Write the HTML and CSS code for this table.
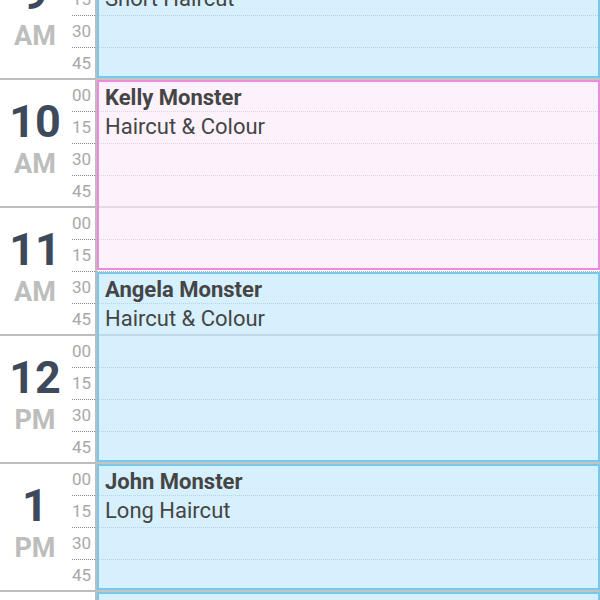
FILE: index.html
```html
<!DOCTYPE html>
<html>
<head>
<meta charset="utf-8">
<link rel="stylesheet" href="styles.css">
</head>
<body>
<div class="calendar">
  <div class="gutter">
    <div class="hour">
      <div class="hour-label"><div class="num">9</div><div class="ampm">AM</div></div>
      <div class="mins"><div class="min">00</div><div class="min">15</div><div class="min">30</div><div class="min">45</div></div>
    </div>
    <div class="hour">
      <div class="hour-label"><div class="num">10</div><div class="ampm">AM</div></div>
      <div class="mins"><div class="min">00</div><div class="min">15</div><div class="min">30</div><div class="min">45</div></div>
    </div>
    <div class="hour">
      <div class="hour-label"><div class="num">11</div><div class="ampm">AM</div></div>
      <div class="mins"><div class="min">00</div><div class="min">15</div><div class="min">30</div><div class="min">45</div></div>
    </div>
    <div class="hour">
      <div class="hour-label"><div class="num">12</div><div class="ampm">PM</div></div>
      <div class="mins"><div class="min">00</div><div class="min">15</div><div class="min">30</div><div class="min">45</div></div>
    </div>
    <div class="hour">
      <div class="hour-label"><div class="num">1</div><div class="ampm">PM</div></div>
      <div class="mins"><div class="min">00</div><div class="min">15</div><div class="min">30</div><div class="min">45</div></div>
    </div>
    <div class="hour">
      <div class="hour-label"><div class="num">2</div><div class="ampm">PM</div></div>
      <div class="mins"><div class="min">00</div><div class="min">15</div><div class="min">30</div><div class="min">45</div></div>
    </div>
  </div>
  <div class="day">
    <div class="dhour"><div class="dslot"></div><div class="dslot"></div><div class="dslot"></div><div class="dslot"></div></div>
    <div class="dhour"><div class="dslot"></div><div class="dslot"></div><div class="dslot"></div><div class="dslot"></div></div>
    <div class="dhour"><div class="dslot"></div><div class="dslot"></div><div class="dslot"></div><div class="dslot"></div></div>
    <div class="dhour"><div class="dslot"></div><div class="dslot"></div><div class="dslot"></div><div class="dslot"></div></div>
    <div class="dhour"><div class="dslot"></div><div class="dslot"></div><div class="dslot"></div><div class="dslot"></div></div>
    <div class="dhour"><div class="dslot"></div><div class="dslot"></div><div class="dslot"></div><div class="dslot"></div></div>

    <div class="appt blue" style="top:0px;height:126px">
      <div class="name">Anna Monster</div>
      <div class="service">Short Haircut</div>
    </div>
    <div class="appt pink" style="top:128px;height:190px">
      <div class="name">Kelly Monster</div>
      <div class="service">Haircut &amp; Colour</div>
    </div>
    <div class="appt blue" style="top:320px;height:190px">
      <div class="name">Angela Monster</div>
      <div class="service">Haircut &amp; Colour</div>
    </div>
    <div class="appt blue" style="top:512px;height:126px">
      <div class="name">John Monster</div>
      <div class="service">Long Haircut</div>
    </div>
    <div class="appt blue" style="top:640px;height:126px">
      <div class="name">Mary Monster</div>
      <div class="service">Blow Dry</div>
    </div>
  </div>
</div>
</body>
</html>
```

FILE: styles.css
```css
html, body {
  margin: 0;
  padding: 0;
  background: #ffffff;
  overflow: hidden;
  height: 600px;
}

body {
  font-family: Roboto, "Liberation Sans", sans-serif;
}

.calendar {
  display: flex;
  margin-top: -48px;
}

.gutter {
  width: 95px;
  flex: none;
  border-right: 2px solid #bdbdbd;
}

.hour {
  height: 128px;
  box-sizing: border-box;
  border-bottom: 2px solid #bdbdbd;
  display: flex;
}

.hour-label {
  width: 70px;
  flex: none;
  text-align: center;
  padding-top: 20px;
  box-sizing: border-box;
}

.num {
  font-size: 45px;
  line-height: 44px;
  font-weight: 700;
  color: #3d4a5b;
}

.ampm {
  margin-top: 7px;
  font-size: 27px;
  line-height: 27px;
  font-weight: 700;
  color: #bdbdbd;
}

.mins {
  margin-left: 2px;
  flex: 1;
  display: flex;
  flex-direction: column;
}

.min {
  height: 32px;
  box-sizing: border-box;
  border-bottom: 1px dotted #8a8a8a;
  font-size: 17px;
  line-height: 31px;
  color: #a8a8a8;
}

.min:last-child {
  height: 30px;
  border-bottom: none;
}

.day {
  flex: 1;
  position: relative;
}

.dhour {
  height: 128px;
  box-sizing: border-box;
  border-bottom: 2px solid #c4c4c4;
}

.dslot {
  height: 32px;
  box-sizing: border-box;
  border-bottom: 1px dotted #b4b4b4;
}

.dslot:last-child {
  height: 30px;
  border-bottom: none;
}

.appt {
  position: absolute;
  left: 0;
  right: 0;
  box-sizing: border-box;
  border: 2px solid;
  padding: 1px 6px;
  color: #454545;
}

.appt.blue {
  background: rgba(186, 230, 252, 0.6);
  border-color: #78c8ee;
}

.appt.pink {
  background: rgba(248, 233, 248, 0.6);
  border-color: #ee8ade;
}

.name {
  font-size: 22px;
  line-height: 29px;
  font-weight: 700;
}

.service {
  font-size: 22px;
  line-height: 29px;
}
```
